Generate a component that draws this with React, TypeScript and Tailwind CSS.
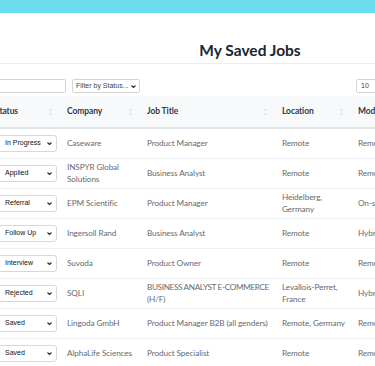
import React from "react";

type Row = { status: string; company: string; title: React.ReactNode; location: string; mode: string };

const rows: Row[] = [
  { status: "In Progress", company: "Caseware", title: "Product Manager", location: "Remote", mode: "Remote" },
  { status: "Applied", company: "INSPYR Global Solutions", title: "Business Analyst", location: "Remote", mode: "Remote" },
  { status: "Referral", company: "EPM Scientific", title: "Product Manager", location: "Heidelberg, Germany", mode: "On-site" },
  { status: "Follow Up", company: "Ingersoll Rand", title: "Business Analyst", location: "Remote", mode: "Hybrid" },
  { status: "Interview", company: "Suvoda", title: "Product Owner", location: "Remote", mode: "Remote" },
  {
    status: "Rejected",
    company: "SQLI",
    title: (
      <>
        <span className="whitespace-nowrap tracking-[-0.35px]">BUSINESS ANALYST E-COMMERCE</span> (H/F)
      </>
    ),
    location: "Levallois-Perret, France",
    mode: "Hybrid",
  },
  { status: "Saved", company: "Lingoda GmbH", title: "Product Manager B2B (all genders)", location: "Remote, Germany", mode: "Remote" },
  { status: "Saved", company: "AlphaLife Sciences", title: "Product Specialist", location: "Remote", mode: "Remote" },
];

function Chevron() {
  return (
    <svg width="5" height="3" viewBox="0 0 5 3">
      <path d="M0.5 0.5 L2.5 2.5 L4.5 0.5" fill="none" stroke="#333" strokeWidth="1.2" />
    </svg>
  );
}

function SortIcon() {
  return (
    <svg width="3" height="8" viewBox="0 0 3 8">
      <path d="M1.5 0 L3 3 L0 3 Z" fill="#e2e4e8" />
      <path d="M1.5 8 L3 5 L0 5 Z" fill="#e2e4e8" />
    </svg>
  );
}

function Header({ label, last = false }: { label: string; last?: boolean }) {
  return (
    <th className="h-[32px] pl-[8px] pr-[7px] text-left font-bold text-[#333a44] align-middle text-[8.5px] tracking-[-0.1px]">
      <div className="flex items-center justify-between">
        <span>{label}</span>
        {!last && <span className="flex"><SortIcon /></span>}
      </div>
    </th>
  );
}

export default function App() {
  return (
    <div className="w-[375px] h-[366px] overflow-hidden bg-white" style={{ fontFamily: 'Lato, "Open Sans", sans-serif' }}>
      <div className="h-[13px] bg-[#6ddcee]" />
      <div className="ml-[-13px] w-[526px]">
        <div className="h-[51px] border-b border-[#eeeeee] flex items-end justify-center pb-[1px]">
          <h1 className="text-[15.5px] leading-[24px] font-bold text-[#1d2430]">My Saved Jobs</h1>
        </div>
        <div className="mt-[15px] flex items-center" style={{ fontFamily: '"Liberation Sans", Arial, sans-serif' }}>
          <div className="h-[14px] w-[79px] border border-[#d4d4d4] rounded-[2px] bg-white" />
          <div className="ml-[6px] h-[14px] w-[68px] border border-[#d4d4d4] rounded-[2px] bg-white flex items-center pl-[3px] pr-[3px] text-[7px] text-[#444]">
            <span className="flex-1">Filter by Status...</span>
            <Chevron />
          </div>
          <div className="ml-auto mr-[117px] h-[14px] w-[40px] border border-[#d4d4d4] rounded-[2px] bg-white flex items-center pl-[4px] text-[7px] text-[#444]">
            10
          </div>
        </div>
        <table className="mt-[3px] table-fixed border-collapse text-[8.2px] tracking-[-0.1px]" style={{ width: 520 }}>
          <colgroup>
            <col style={{ width: 72 }} />
            <col style={{ width: 80 }} />
            <col style={{ width: 135 }} />
            <col style={{ width: 76 }} />
            <col style={{ width: 157 }} />
          </colgroup>
          <thead>
            <tr className="bg-[#f8f9fb] border-b-[2px] border-[#e3e5e8]">
              <Header label="Status" />
              <Header label="Company" />
              <Header label="Job Title" />
              <Header label="Location" />
              <Header label="Mode" last />
            </tr>
          </thead>
          <tbody>
            {rows.map((r, i) => (
              <tr key={i} className="h-[30px] border-b border-[#eef0f2] text-[#666a70]">
                <td className="pl-[9px] pr-[2px] align-middle">
                  <div
                    className="h-[17px] w-[61px] border border-[#d8d8d8] rounded-[3px] bg-white flex items-center pl-[8px] pr-[4px] text-[7px] tracking-normal text-[#111]"
                    style={{ fontFamily: '"Liberation Sans", Arial, sans-serif' }}
                  >
                    <span className="flex-1">{r.status}</span>
                    <Chevron />
                  </div>
                </td>
                <td className="pl-[8px] pr-[2px] leading-[12px] align-middle">{r.company}</td>
                <td className="pl-[8px] pr-[2px] leading-[12px] align-middle">{r.title}</td>
                <td className="pl-[8px] pr-[2px] leading-[12px] align-middle">{r.location}</td>
                <td className="pl-[8px] pr-[2px] leading-[12px] align-middle">{r.mode}</td>
              </tr>
            ))}
          </tbody>
        </table>
      </div>
    </div>
  );
}
